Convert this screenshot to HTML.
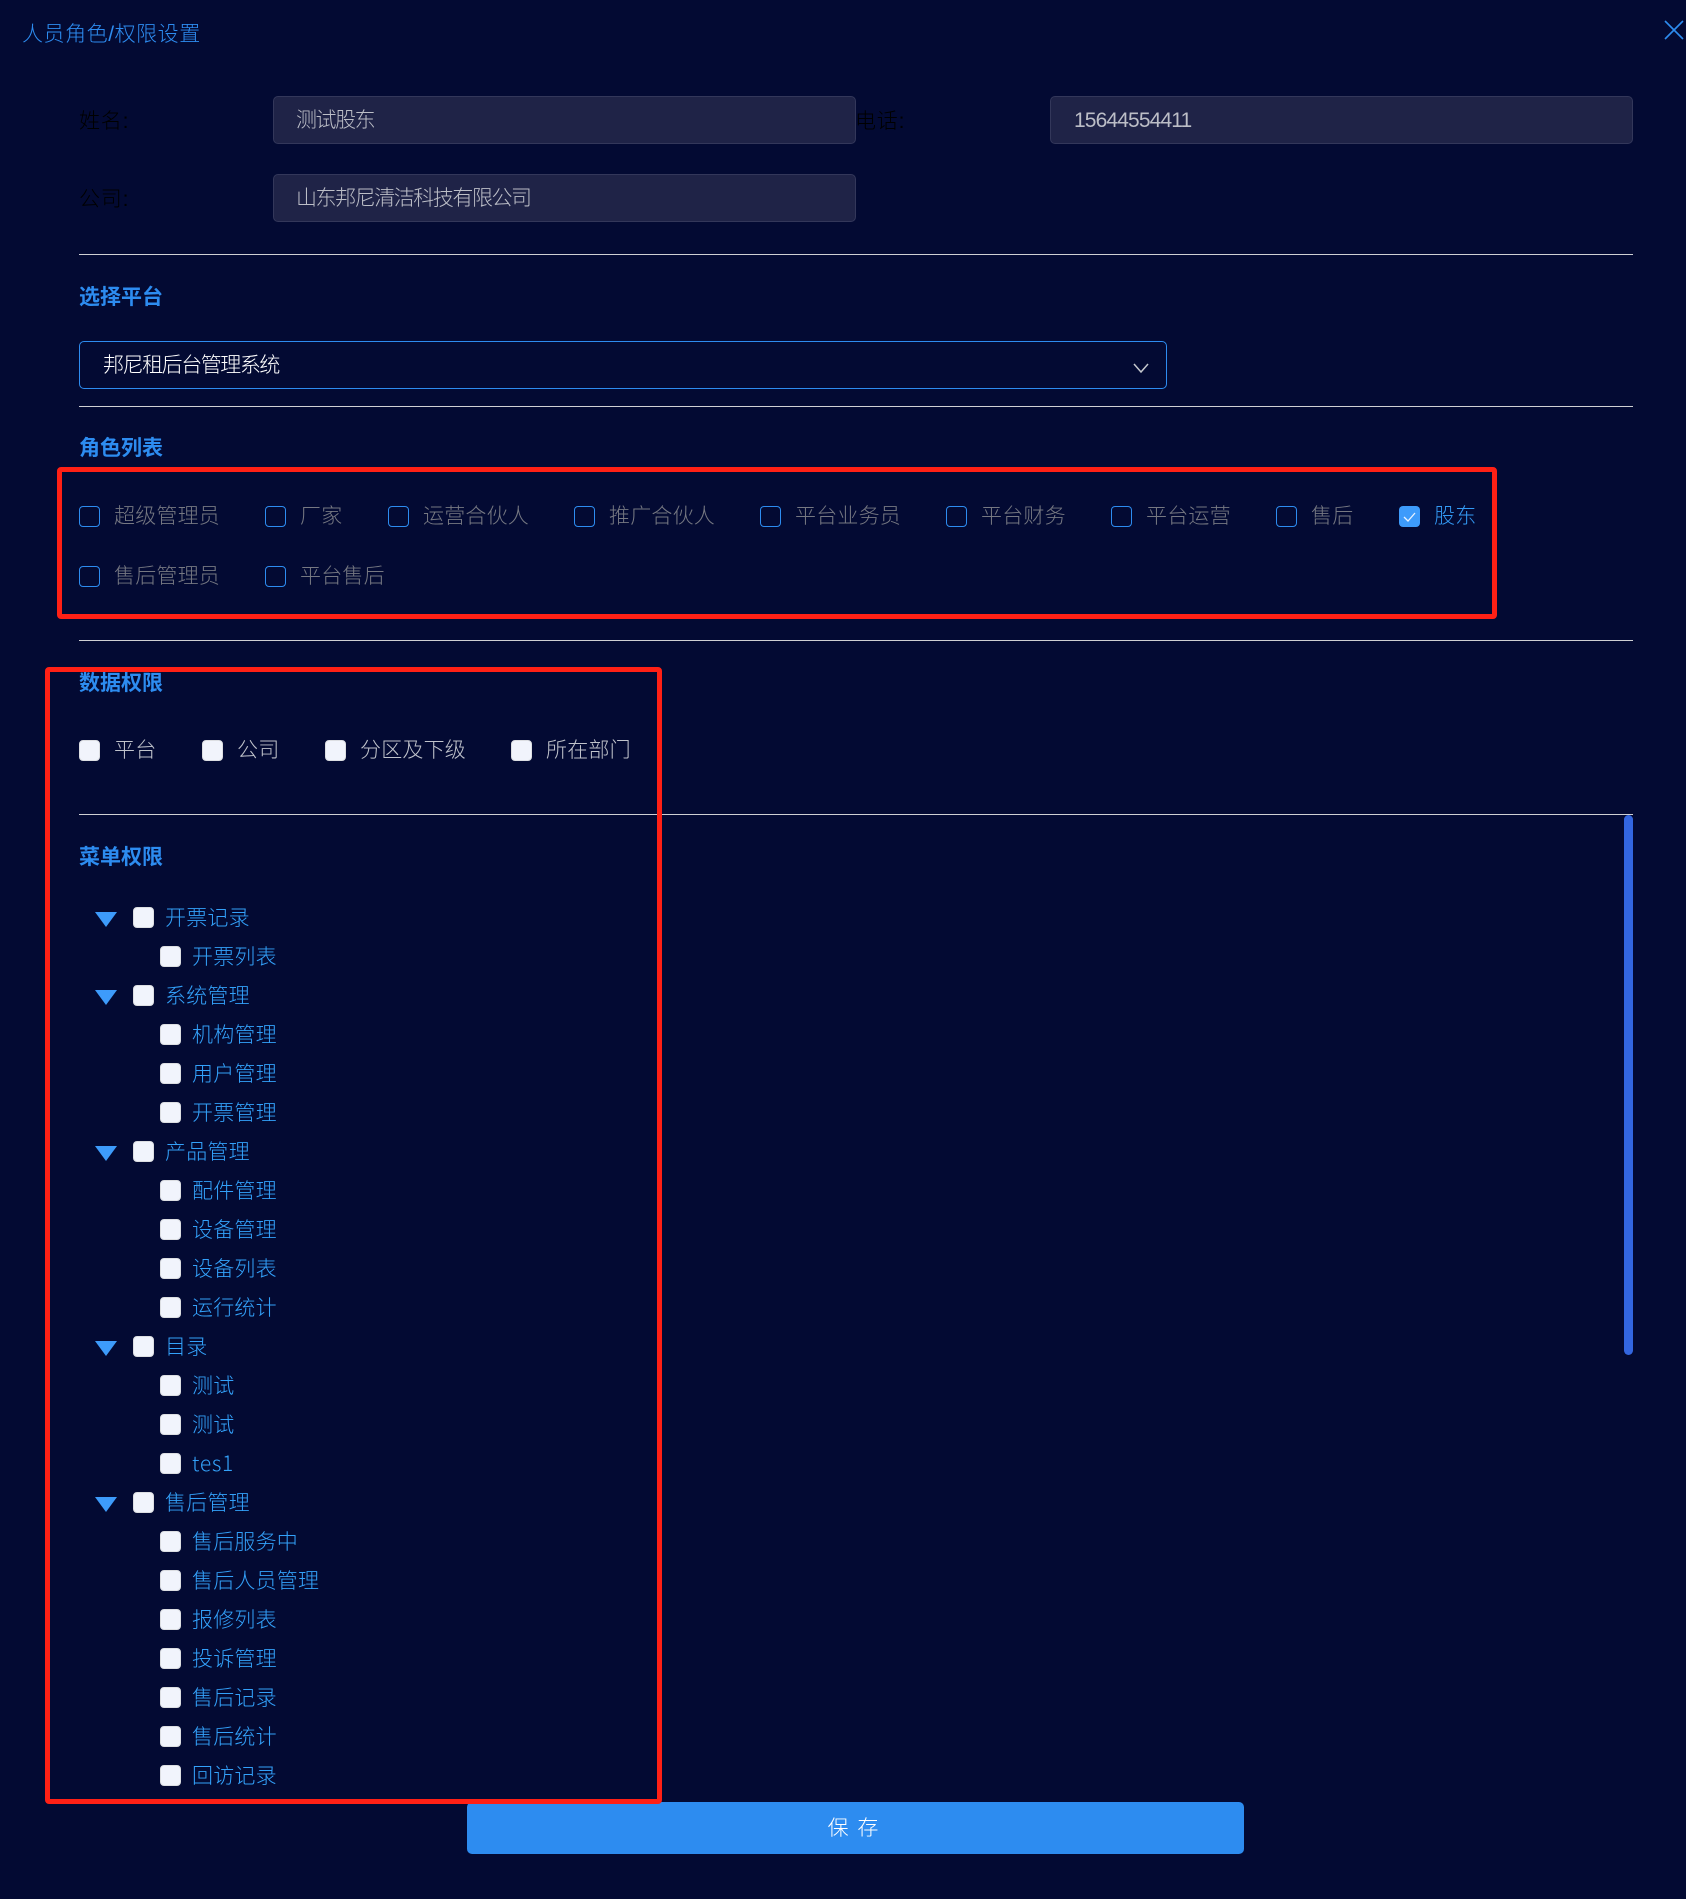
<!DOCTYPE html>
<html lang="zh-CN">
<head>
<meta charset="utf-8">
<title>人员角色/权限设置</title>
<style>
html,body{margin:0;padding:0;background:#030a33;}
#p{position:relative;width:1686px;height:1899px;overflow:hidden;background:#030a33;font-family:"Liberation Sans","Noto Sans CJK SC",sans-serif;font-size:21px;font-weight:300;}
#p *{box-sizing:border-box;}
.t{position:absolute;white-space:nowrap;line-height:30px;height:30px;margin-top:1px;letter-spacing:.2px;}
.h{color:#2d8cf0;font-weight:700;letter-spacing:0;}
.lb{color:#000;letter-spacing:.8px;}
.in{position:absolute;background:#1f2347;border:1px solid #33375a;border-radius:5px;}
.v{color:#bcbec7;letter-spacing:-1.45px;}
.hr{position:absolute;left:79px;width:1554px;height:1px;background:#cfd0d4;}
.cb{position:absolute;width:21px;height:21px;border-radius:4px;}
.o{border:1.5px solid #2d8cf0;background:transparent;}
.w{background:#f1f4fc;border:1px solid #dcdee2;}
.r{color:#767882;}
.d{color:#c0c3cb;}
.b{color:#33a1fa;}
.tri{position:absolute;left:95px;width:0;height:0;border-left:11.5px solid transparent;border-right:11.5px solid transparent;border-top:15px solid #3d9bfb;}
.red{position:absolute;border:5px solid #ff2015;border-radius:4px;z-index:5;}
</style>
</head>
<body>
<div id="p">
<div class="t" style="left:22px;top:19px;color:#2d8cf0;letter-spacing:.55px;">人员角色/权限设置</div>
<svg style="position:absolute;left:1664px;top:20px" width="20" height="20" viewBox="0 0 20 20"><path d="M1 1L19 19M19 1L1 19" stroke="#2d8cf0" stroke-width="1.6" fill="none"/></svg>

<div class="t lb" style="left:79px;top:106px;">姓名:</div>
<div class="in" style="left:273px;top:96px;width:583px;height:48px;"></div>
<div class="t v" style="left:296px;top:105px;">测试股东</div>
<div class="t lb" style="left:855px;top:106px;">电话:</div>
<div class="in" style="left:1050px;top:96px;width:583px;height:48px;"></div>
<div class="t v" style="left:1074px;top:105px;letter-spacing:-.87px;">15644554411</div>
<div class="t lb" style="left:79px;top:184px;">公司:</div>
<div class="in" style="left:273px;top:174px;width:583px;height:48px;"></div>
<div class="t v" style="left:296px;top:183px;">山东邦尼清洁科技有限公司</div>
<div class="hr" style="top:254px;"></div>

<div class="t h" style="left:79px;top:282px;">选择平台</div>
<div style="position:absolute;left:79px;top:341px;width:1088px;height:48px;border:1px solid #2d8cf0;border-radius:5px;"></div>
<div class="t" style="left:103px;top:350px;color:#fff;letter-spacing:-1.45px;">邦尼租后台管理系统</div>
<svg style="position:absolute;left:1132px;top:362px" width="18" height="12" viewBox="0 0 18 12"><path d="M2 2L9 10L16 2" stroke="#c5c8ce" stroke-width="1.5" fill="none"/></svg>
<div class="hr" style="top:406px;"></div>

<div class="t h" style="left:79px;top:433px;">角色列表</div>
<div class="cb o" style="left:79px;top:506px;"></div><div class="t r" style="left:114px;top:501px;">超级管理员</div>
<div class="cb o" style="left:265px;top:506px;"></div><div class="t r" style="left:300px;top:501px;">厂家</div>
<div class="cb o" style="left:388px;top:506px;"></div><div class="t r" style="left:423px;top:501px;">运营合伙人</div>
<div class="cb o" style="left:574px;top:506px;"></div><div class="t r" style="left:609px;top:501px;">推广合伙人</div>
<div class="cb o" style="left:760px;top:506px;"></div><div class="t r" style="left:795px;top:501px;">平台业务员</div>
<div class="cb o" style="left:946px;top:506px;"></div><div class="t r" style="left:981px;top:501px;">平台财务</div>
<div class="cb o" style="left:1111px;top:506px;"></div><div class="t r" style="left:1146px;top:501px;">平台运营</div>
<div class="cb o" style="left:1276px;top:506px;"></div><div class="t r" style="left:1311px;top:501px;">售后</div>
<div class="cb" style="left:1399px;top:506px;background:#3d9bfb;"></div>
<svg style="position:absolute;left:1399px;top:506px" width="21" height="21" viewBox="0 0 21 21"><path d="M5 11L9 15L16 7" stroke="#e8f2ff" stroke-width="1.3" fill="none"/></svg>
<div class="t" style="left:1434px;top:501px;color:#339af5;">股东</div>
<div class="cb o" style="left:79px;top:566px;"></div><div class="t r" style="left:114px;top:561px;">售后管理员</div>
<div class="cb o" style="left:265px;top:566px;"></div><div class="t r" style="left:300px;top:561px;">平台售后</div>
<div class="red" style="left:57px;top:467px;width:1440px;height:152px;"></div>
<div class="hr" style="top:640px;"></div>

<div class="t h" style="left:79px;top:668px;">数据权限</div>
<div class="cb w" style="left:79px;top:740px;"></div><div class="t d" style="left:114px;top:735px;">平台</div>
<div class="cb w" style="left:202px;top:740px;"></div><div class="t d" style="left:237px;top:735px;">公司</div>
<div class="cb w" style="left:325px;top:740px;"></div><div class="t d" style="left:360px;top:735px;">分区及下级</div>
<div class="cb w" style="left:511px;top:740px;"></div><div class="t d" style="left:546px;top:735px;">所在部门</div>
<div class="hr" style="top:814px;"></div>
<div style="position:absolute;left:1624px;top:815px;width:9px;height:540px;border-radius:5px;background:#3366e0;"></div>

<div class="t h" style="left:79px;top:842px;">菜单权限</div>

<div class="tri" style="top:912px;"></div><div class="cb w" style="left:133px;top:907px;"></div><div class="t b" style="left:165px;top:903px;">开票记录</div>
<div class="cb w" style="left:160px;top:946px;"></div><div class="t b" style="left:192px;top:942px;">开票列表</div>
<div class="tri" style="top:990px;"></div><div class="cb w" style="left:133px;top:985px;"></div><div class="t b" style="left:165px;top:981px;">系统管理</div>
<div class="cb w" style="left:160px;top:1024px;"></div><div class="t b" style="left:192px;top:1020px;">机构管理</div>
<div class="cb w" style="left:160px;top:1063px;"></div><div class="t b" style="left:192px;top:1059px;">用户管理</div>
<div class="cb w" style="left:160px;top:1102px;"></div><div class="t b" style="left:192px;top:1098px;">开票管理</div>
<div class="tri" style="top:1146px;"></div><div class="cb w" style="left:133px;top:1141px;"></div><div class="t b" style="left:165px;top:1137px;">产品管理</div>
<div class="cb w" style="left:160px;top:1180px;"></div><div class="t b" style="left:192px;top:1176px;">配件管理</div>
<div class="cb w" style="left:160px;top:1219px;"></div><div class="t b" style="left:192px;top:1215px;">设备管理</div>
<div class="cb w" style="left:160px;top:1258px;"></div><div class="t b" style="left:192px;top:1254px;">设备列表</div>
<div class="cb w" style="left:160px;top:1297px;"></div><div class="t b" style="left:192px;top:1293px;">运行统计</div>
<div class="tri" style="top:1341px;"></div><div class="cb w" style="left:133px;top:1336px;"></div><div class="t b" style="left:165px;top:1332px;">目录</div>
<div class="cb w" style="left:160px;top:1375px;"></div><div class="t b" style="left:192px;top:1371px;">测试</div>
<div class="cb w" style="left:160px;top:1414px;"></div><div class="t b" style="left:192px;top:1410px;">测试</div>
<div class="cb w" style="left:160px;top:1453px;"></div><div class="t b" style="left:192px;top:1447px;font-family:'Noto Sans CJK SC',sans-serif;letter-spacing:.7px;">tes1</div>
<div class="tri" style="top:1497px;"></div><div class="cb w" style="left:133px;top:1492px;"></div><div class="t b" style="left:165px;top:1488px;">售后管理</div>
<div class="cb w" style="left:160px;top:1531px;"></div><div class="t b" style="left:192px;top:1527px;">售后服务中</div>
<div class="cb w" style="left:160px;top:1570px;"></div><div class="t b" style="left:192px;top:1566px;">售后人员管理</div>
<div class="cb w" style="left:160px;top:1609px;"></div><div class="t b" style="left:192px;top:1605px;">报修列表</div>
<div class="cb w" style="left:160px;top:1648px;"></div><div class="t b" style="left:192px;top:1644px;">投诉管理</div>
<div class="cb w" style="left:160px;top:1687px;"></div><div class="t b" style="left:192px;top:1683px;">售后记录</div>
<div class="cb w" style="left:160px;top:1726px;"></div><div class="t b" style="left:192px;top:1722px;">售后统计</div>
<div class="cb w" style="left:160px;top:1765px;"></div><div class="t b" style="left:192px;top:1761px;">回访记录</div>

<div class="red" style="left:45px;top:667px;width:617px;height:1137px;"></div>
<div style="position:absolute;left:467px;top:1802px;width:777px;height:52px;background:#2d8cf0;border-radius:5px;color:#fff;text-align:center;line-height:54px;font-size:21px;word-spacing:3px;padding-right:5px;">保 存</div>
</div>
</body>
</html>
